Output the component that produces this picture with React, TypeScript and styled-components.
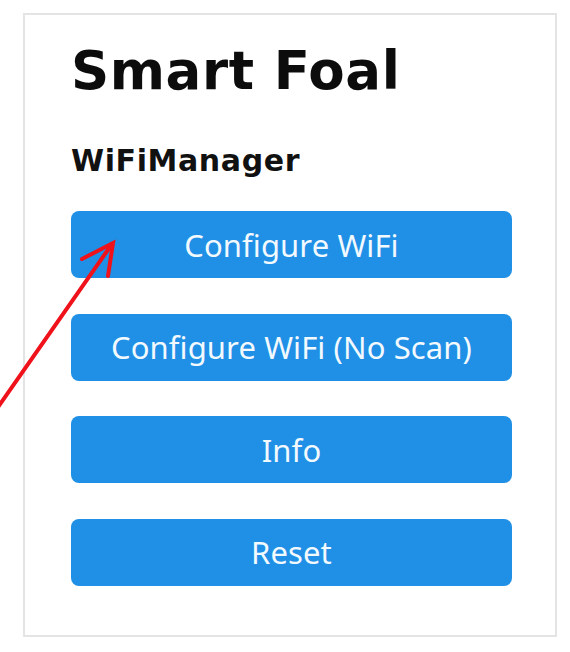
import React from "react";
import styled, { createGlobalStyle } from "styled-components";

const Global = createGlobalStyle`
  html, body { margin: 0; padding: 0; background: #ffffff; }
  body { width: 570px; height: 652px; overflow: hidden; position: relative; }
`;

const Page = styled.div`
  position: relative;
  width: 570px;
  height: 652px;
  padding: 13px 0 0 23px;
  box-sizing: border-box;
`;

const Panel = styled.div`
  width: 534px;
  height: 624px;
  box-sizing: border-box;
  border: 2px solid #e4e4e4;
  padding: 26px 42px 0 46px;
  display: flex;
  flex-direction: column;
`;

const Title = styled.h1`
  margin: 0;
  font-family: "DejaVu Sans", Verdana, sans-serif;
  font-weight: 700;
  font-size: 53px;
  line-height: 60px;
  letter-spacing: 0.6px;
  color: #0c0c0c;
`;

const Subtitle = styled.h3`
  margin: 42px 0 0 0;
  font-family: "DejaVu Sans", Verdana, sans-serif;
  font-weight: 700;
  font-size: 30px;
  line-height: 36px;
  letter-spacing: 0.6px;
  color: #111;
`;

const Menu = styled.div`
  margin-top: 32px;
  display: flex;
  flex-direction: column;
  gap: 35.5px;
`;

const Button = styled.button`
  display: flex;
  align-items: center;
  justify-content: center;
  width: 441px;
  height: 67px;
  border: 0;
  border-radius: 8px;
  background: #1f90e5;
  color: #f2f9ff;
  font-family: "Noto Sans", "Open Sans", sans-serif;
  font-weight: 400;
  font-size: 31px;
  letter-spacing: 0.1px;
  padding: 0;
  cursor: pointer;
`;

const Overlay = styled.svg`
  position: absolute;
  left: 0;
  top: 0;
  pointer-events: none;
`;

const items = ["Configure WiFi", "Configure WiFi (No Scan)", "Info", "Reset"];

export default function App() {
  return (
    <>
      <Global />
      <Page>
        <Panel>
          <Title>Smart Foal</Title>
          <Subtitle>WiFiManager</Subtitle>
          <Menu>
            {items.map((t) => (
              <Button key={t}>{t}</Button>
            ))}
          </Menu>
        </Panel>
        <Overlay width={570} height={652} viewBox="0 0 570 652">
          <line x1={-2} y1={407} x2={112} y2={244} stroke="#f0121a" strokeWidth={4} strokeLinecap="round" />
          <polyline
            points="82,259 113,243 108,276"
            fill="none"
            stroke="#f0121a"
            strokeWidth={4}
            strokeLinecap="round"
            strokeLinejoin="miter"
          />
        </Overlay>
      </Page>
    </>
  );
}
